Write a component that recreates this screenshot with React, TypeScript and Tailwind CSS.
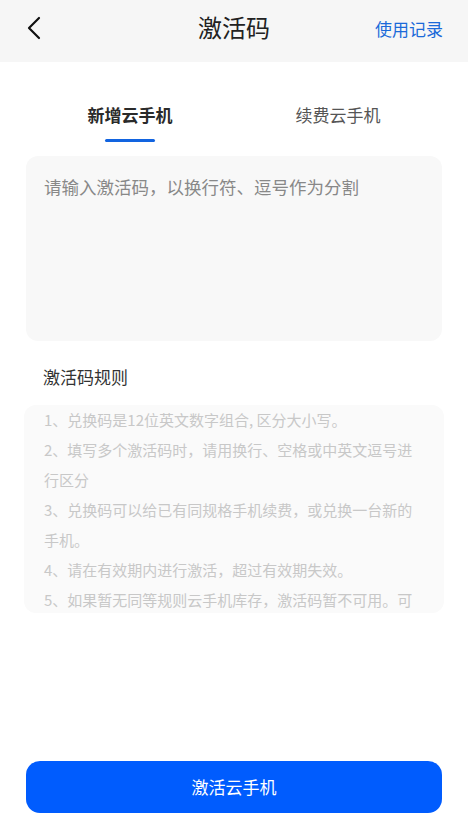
import React from "react";

const rules = [
  "1、兑换码是12位英文数字组合, 区分大小写。",
  "2、填写多个激活码时，请用换行、空格或中英文逗号进行区分",
  "3、兑换码可以给已有同规格手机续费，或兑换一台新的手机。",
  "4、请在有效期内进行激活，超过有效期失效。",
  "5、如果暂无同等规则云手机库存，激活码暂不可用。可在有库存时再进行激活。",
];

export default function App() {
  return (
    <div
      className="w-[468px] h-[834px] bg-white flex flex-col overflow-hidden"
      style={{ fontFamily: '"Microsoft YaHei", "Noto Sans CJK SC", "Noto Sans", sans-serif' }}
    >
      <div className="h-[62px] bg-[#f6f6f6] flex items-center justify-between px-[26px] relative">
        <svg width="16" height="24" viewBox="0 0 16 24" className="mb-[6px]">
          <path d="M13 2 L3 12 L13 22" stroke="#111" strokeWidth="2.2" fill="none" strokeLinecap="round" strokeLinejoin="round" />
        </svg>
        <div className="absolute left-0 right-0 top-[9px] text-center text-[24px] leading-[36px] text-[#222] pointer-events-none">
          激活码
        </div>
        <div className="text-[17px] text-[#1b6ad9] mb-[4px] -mr-[1px]">使用记录</div>
      </div>

      <div className="flex px-[26px] mt-[40px]">
        <div className="flex-1 flex flex-col items-center">
          <div className="text-[17px] leading-[26px] font-bold text-[#2a2a2a]">新增云手机</div>
          <div className="w-[50px] h-[3px] rounded-full bg-[#1264e0] mt-[11px]" />
        </div>
        <div className="flex-1 flex flex-col items-center">
          <div className="text-[17px] leading-[26px] text-[#555]">续费云手机</div>
        </div>
      </div>

      <div className="mx-[26px] mt-[14px] h-[185px] rounded-[12px] bg-[#f8f8f8] px-[18px] pt-[16px]">
        <div className="text-[17.5px] leading-[30px] text-[#888]">请输入激活码，以换行符、逗号作为分割</div>
      </div>

      <div className="px-[43px] mt-[22px] text-[17px] leading-[28px] text-[#333]">激活码规则</div>

      <div className="mx-[24px] mt-[14px] h-[208px] rounded-[12px] bg-[#fafafa] px-[20px] overflow-hidden">
        {rules.map((r) => (
          <div key={r} className="text-[15px] leading-[30px] text-[#c8c8c8]">
            {r}
          </div>
        ))}
      </div>

      <div className="flex-1" />

      <div className="mx-[26px] mb-[21px] h-[52px] rounded-[14px] bg-[#005cfe] flex items-center justify-center text-white text-[17px]">
        激活云手机
      </div>
    </div>
  );
}
